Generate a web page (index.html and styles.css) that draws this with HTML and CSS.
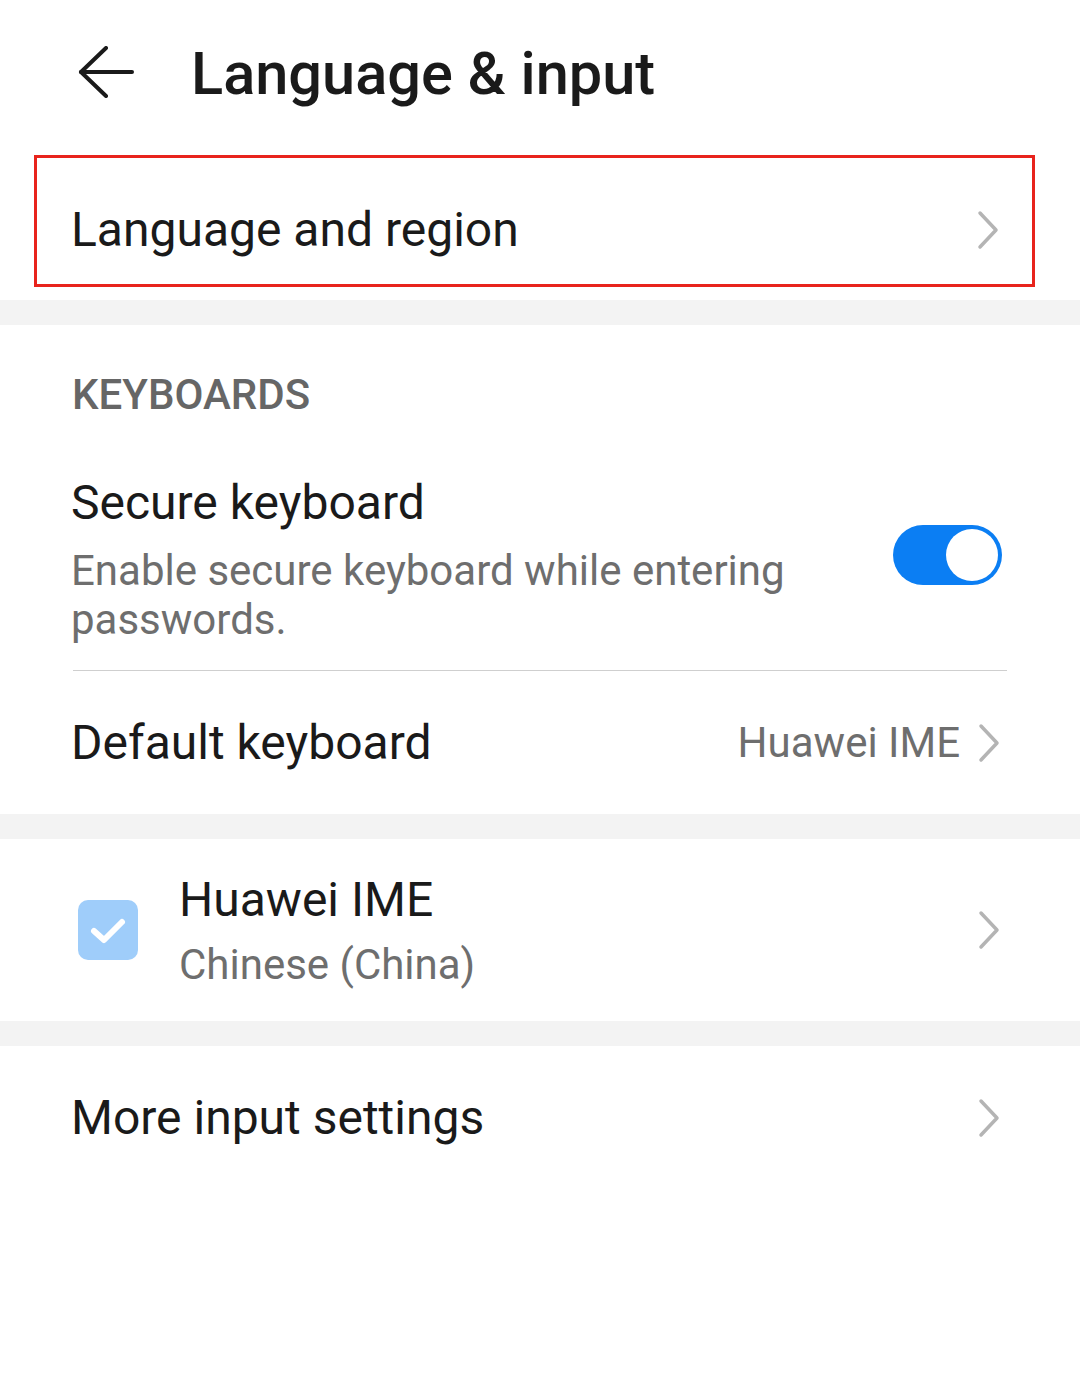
FILE: index.html
```html
<!DOCTYPE html>
<html lang="en">
<head>
    <meta charset="UTF-8">
    <meta name="viewport" content="width=device-width, initial-scale=1.0">
    <title>Language &amp; input</title>
    <link rel="stylesheet" href="styles.css">
</head>
<body>
    <header class="top-bar">
        <svg class="back-icon" width="56" height="52" viewBox="0 0 56 52">
            <polyline points="28,2 3,26 28,50" fill="none" stroke="#1a1a1a" stroke-width="4" stroke-linecap="round" stroke-linejoin="round"/>
            <line x1="3" y1="26" x2="54" y2="26" stroke="#1a1a1a" stroke-width="4" stroke-linecap="round"/>
        </svg>
        <h1>Language &amp; input</h1>
    </header>

    <!-- Highlighted item -->
    <div class="item highlight">
        <span class="item-title">Language and region</span>
        <svg class="chevron" width="22" height="40" viewBox="0 0 22 40"><polyline points="3,3 19,20 3,37"/></svg>
    </div>

    <div class="band"></div>

    <!-- Keyboards -->
    <section class="group">
        <div class="group-label">KEYBOARDS</div>

        <div class="item secure">
            <div class="item-text">
                <div class="item-title">Secure keyboard</div>
                <div class="item-sub">Enable secure keyboard while entering passwords.</div>
            </div>
            <div class="toggle on"><span class="knob"></span></div>
        </div>

        <div class="divider"></div>

        <div class="item default-kb">
            <span class="item-title">Default keyboard</span>
            <span class="item-value">Huawei IME</span>
            <svg class="chevron" width="22" height="40" viewBox="0 0 22 40"><polyline points="3,3 19,20 3,37"/></svg>
        </div>
    </section>

    <div class="band"></div>

    <section class="group">
        <div class="item ime">
            <div class="checkbox">
                <svg width="60" height="60" viewBox="0 0 60 60"><polyline points="16,31 26,40 44,22" fill="none" stroke="#fff" stroke-width="6" stroke-linecap="round" stroke-linejoin="round"/></svg>
            </div>
            <div class="item-text">
                <div class="item-title">Huawei IME</div>
                <div class="item-sub">Chinese (China)</div>
            </div>
            <svg class="chevron" width="22" height="40" viewBox="0 0 22 40"><polyline points="3,3 19,20 3,37"/></svg>
        </div>
    </section>

    <div class="band"></div>

    <section class="group">
        <div class="item more">
            <span class="item-title">More input settings</span>
            <svg class="chevron" width="22" height="40" viewBox="0 0 22 40"><polyline points="3,3 19,20 3,37"/></svg>
        </div>
    </section>
</body>
</html>
```

FILE: styles.css
```css
* { margin: 0; padding: 0; box-sizing: border-box; }
body { font-family: Roboto, "Noto Sans", Arial, sans-serif; background: #fff; color: #1a1a1a; width: 1080px; min-height: 1375px; }

.top-bar { height: 150px; display: flex; align-items: center; padding-left: 78px; }
.back-icon { flex: none; margin-top: -6px; }
.top-bar h1 { font-size: 59.5px; font-weight: 500; line-height: 1; margin-left: 57px; color: #1a1a1a; }

.item { display: flex; align-items: center; padding: 0 80px 0 71px; }
.item-title { font-size: 48px; line-height: 58px; color: #1a1a1a; flex: 1; }
.item-text { flex: 1; }
.item-sub { font-size: 42px; line-height: 49px; color: #6e6e6e; margin-top: 14px; }
.item-value { font-size: 42px; color: #6e6e6e; margin-right: 18px; }

.chevron { flex: none; fill: none; stroke: #b4b4b4; stroke-width: 3.5; stroke-linecap: round; stroke-linejoin: round; }

.highlight { margin: 5px 45px 0 34px; height: 132px; border: 3px solid #e8231c; padding: 18px 33px 0 34px; }

.band { height: 25px; background: #f3f3f3; margin-top: 13px; }
.group + .band { margin-top: 0; }

.group-label { font-size: 42px; font-weight: 500; line-height: 48px; color: #666; padding: 46px 72px 0; }

.secure { padding-top: 55px; padding-bottom: 26px; padding-right: 78px; }
.secure .item-text { padding-right: 90px; }

.toggle { flex: none; width: 109px; height: 60px; border-radius: 30px; background: #0b7ef3; display: flex; align-items: center; justify-content: flex-end; padding: 0 4px; margin-bottom: 8px; }
.knob { width: 52px; height: 52px; border-radius: 50%; background: #fff; }

.divider { height: 1px; background: #cfcfcf; margin: 0 73px; }

.default-kb { height: 143px; padding-top: 0; }

.ime { height: 182px; padding-left: 78px; }
.ime .item-sub { margin-top: 11px; }
.checkbox { flex: none; width: 60px; height: 60px; border-radius: 10px; background: #9fcdfa; margin-right: 41px; }
.checkbox svg { display: block; }

.more { padding-top: 43px; padding-bottom: 43px; }
```
